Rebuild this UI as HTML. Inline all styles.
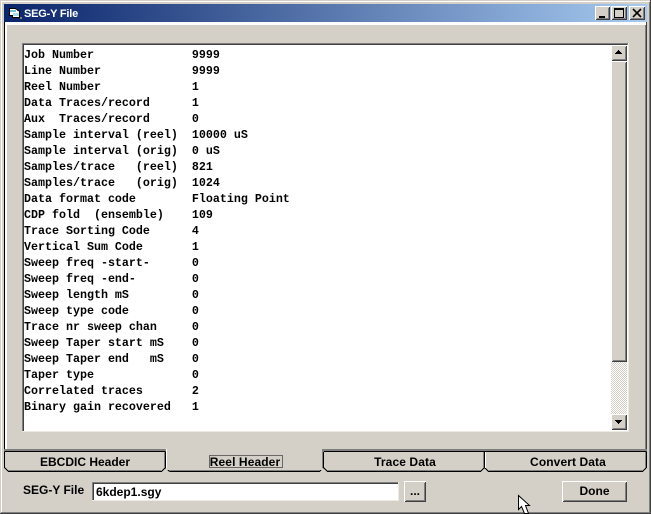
<!DOCTYPE html>
<html>
<head>
<meta charset="utf-8">
<style>
html,body{margin:0;padding:0;width:651px;height:514px;overflow:hidden;background:#d4d0c8}
.a{position:absolute}
#title{left:4px;top:4px;width:643px;height:18px;background:linear-gradient(90deg,#0a246a,#a6caf0)}
#ttext{left:24px;top:7px;font:bold 11px/14px "Liberation Sans",sans-serif;color:#fff;white-space:pre;letter-spacing:-.2px}
pre{margin:0;position:absolute;left:24px;top:47px;font:bold 11.67px/16px "Liberation Mono",monospace;color:#000}
.up{background:#d4d0c8;box-shadow:inset 1px 1px 0 #fff,inset -1px -1px 0 #404040,inset 2px 2px 0 #d4d0c8,inset -2px -2px 0 #808080}
.tab{font:bold 12px/14px "Liberation Sans",sans-serif;color:#000;text-align:center;white-space:pre}
</style>
</head>
<body>
<svg class="a" style="left:0;top:0" width="651" height="514" shape-rendering="crispEdges">
  <rect x="1" y="1" width="649" height="1" fill="#fff"/>
  <rect x="1" y="1" width="1" height="511" fill="#fff"/>
  <rect x="650" y="0" width="1" height="514" fill="#404040"/>
  <rect x="649" y="2" width="1" height="511" fill="#808080"/>
  <rect x="0" y="513" width="651" height="1" fill="#404040"/>
  <rect x="1" y="512" width="649" height="1" fill="#808080"/>
  <!-- panel -->
  <rect x="4" y="22" width="1" height="429" fill="#000"/>
  <rect x="5" y="22" width="641" height="3" fill="#fff"/>
  <rect x="5" y="23" width="2" height="427" fill="#fff"/>
  <rect x="646" y="22" width="1" height="429" fill="#404040"/>
  <rect x="645" y="25" width="1" height="425" fill="#808080"/>
  <rect x="4" y="449" width="643" height="2" fill="#808080"/>
  <!-- text box -->
  <rect x="22" y="43" width="606" height="389" fill="#fff"/>
  <rect x="22" y="43" width="606" height="2" fill="#808080"/>
  <rect x="22" y="43" width="2" height="389" fill="#808080"/>
  <rect x="23" y="44" width="604" height="1" fill="#404040"/>
  <rect x="23" y="44" width="1" height="387" fill="#404040"/>
  <rect x="22" y="431" width="607" height="1" fill="#eeeae2"/>
  <rect x="628" y="43" width="1" height="389" fill="#eeeae2"/>
  <!-- tabs -->
  <g fill="none" stroke="#000" stroke-width="1">
    <path d="M4.500 451.500H165.500M323.500 451.500H646.500"/>
    <path d="M4.500 451.500V467.500L8.500 471.500H161.500L165.500 467.500V451.500"/>
    <path d="M323.500 451.500V467.500L327.500 471.500H480.500L484.500 467.500V451.500"/>
    <path d="M484.500 451.500V467.500L488.500 471.500H642.500L646.500 467.500V451.500"/>
    <path d="M169.500 471.500H319.500L323.500 467.500"/>
    <path d="M165.500 467.500L169.500 471.500"/>
  </g>
  <rect x="169" y="470" width="151" height="1" fill="#808080"/>
  <rect x="8" y="470" width="153" height="1" fill="#808080"/>
  <rect x="327" y="470" width="154" height="1" fill="#808080"/>
  <rect x="489" y="470" width="154" height="1" fill="#808080"/>
  <rect x="164" y="452" width="1" height="16" fill="#808080"/>
  <rect x="483" y="452" width="1" height="16" fill="#808080"/>
  <rect x="645" y="452" width="1" height="16" fill="#808080"/>
  <rect x="485" y="452" width="1" height="16" fill="#fff"/>
  <!-- selected tab: covers the lower panel edge -->
  <rect x="166" y="449" width="157" height="21" fill="#d4d0c8"/>
  <rect x="169" y="470" width="151" height="1" fill="#808080"/>
  <rect x="166" y="449" width="1" height="19" fill="#fff"/>
  <rect x="322" y="449" width="2" height="3" fill="#808080"/>
  <rect x="322" y="452" width="1" height="16" fill="#808080"/>
  <!-- focus rectangle -->
  <rect x="209.500" y="455.500" width="73" height="12" fill="none" stroke="#000" stroke-dasharray="1 1"/>
  <!-- file edit -->
  <rect x="92" y="482" width="307" height="19" fill="#fff"/>
  <rect x="92" y="482" width="307" height="1" fill="#808080"/>
  <rect x="92" y="482" width="1" height="19" fill="#808080"/>
  <rect x="93" y="483" width="305" height="1" fill="#404040"/>
  <rect x="93" y="483" width="1" height="17" fill="#404040"/>
  <rect x="398" y="482" width="1" height="19" fill="#eeeae2"/>
  <rect x="92" y="500" width="307" height="1" fill="#eeeae2"/>
  <!-- cursor -->
  <path d="M518.500 495.500V509.500L521.500 506.500L524.500 513.500H528.500L525.500 505.500H529.500Z" fill="#fff" stroke="#000" stroke-width="1" shape-rendering="auto"/>
</svg>

<div id="title" class="a"></div>
<svg class="a" style="left:8px;top:7px" width="15" height="14" shape-rendering="crispEdges">
  <path d="M1.500 1.500H7.500L11.500 4.500V10.500H4.500V8.500H1.500Z" fill="#fff" stroke="#000"/>
  <rect x="2" y="3" width="6" height="2" fill="#6fc0d8"/>
  <rect x="5" y="6" width="6" height="3" fill="#a6e0f0"/>
  <rect x="12" y="10" width="2" height="2" fill="#808080"/>
</svg>
<div id="ttext" class="a">SEG-Y File</div>

<div class="a up" style="left:595px;top:6px;width:15px;height:14px"><div class="a" style="left:4px;top:10px;width:6px;height:2px;background:#000"></div></div>
<div class="a up" style="left:611px;top:6px;width:16px;height:14px"><div class="a" style="left:3px;top:2px;width:8px;height:7px;border:1px solid #000;border-top-width:2px"></div></div>
<div class="a up" style="left:629px;top:6px;width:16px;height:14px">
  <svg class="a" style="left:3px;top:2px" width="10" height="10"><path d="M1 1L9 9M9 1L1 9" stroke="#000" stroke-width="1.600"/></svg>
</div>

<pre>Job Number              9999
Line Number             9999
Reel Number             1
Data Traces/record      1
Aux  Traces/record      0
Sample interval (reel)  10000 uS
Sample interval (orig)  0 uS
Samples/trace   (reel)  821
Samples/trace   (orig)  1024
Data format code        Floating Point
CDP fold  (ensemble)    109
Trace Sorting Code      4
Vertical Sum Code       1
Sweep freq -start-      0
Sweep freq -end-        0
Sweep length mS         0
Sweep type code         0
Trace nr sweep chan     0
Sweep Taper start mS    0
Sweep Taper end   mS    0
Taper type              0
Correlated traces       2
Binary gain recovered   1</pre>

<!-- scrollbar -->
<div class="a" style="left:611px;top:362px;width:16px;height:53px;background:repeating-conic-gradient(#d4d0c8 0 25%,#fff 0 50%) 0 0/2px 2px"></div>
<div class="a up" style="left:611px;top:45px;width:16px;height:16px">
  <svg class="a" style="left:4px;top:5px" width="8" height="5" shape-rendering="crispEdges"><path d="M0 4H7V3H6V2H5V1H4V0H3V1H2V2H1V3H0Z" fill="#000"/></svg>
</div>
<div class="a up" style="left:611px;top:61px;width:16px;height:301px"></div>
<div class="a up" style="left:611px;top:414px;width:16px;height:16px">
  <svg class="a" style="left:4px;top:6px" width="8" height="5" shape-rendering="crispEdges"><path d="M0 0H7V1H6V2H5V3H4V4H3V3H2V2H1V1H0Z" fill="#000"/></svg>
</div>

<div class="a tab" style="left:5px;top:455px;width:160px">EBCDIC Header</div>
<div class="a tab" style="left:166px;top:455px;width:158px;letter-spacing:.1px">Reel Header</div>
<div class="a tab" style="left:325px;top:455px;width:160px;letter-spacing:.1px">Trace Data</div>
<div class="a tab" style="left:488px;top:455px;width:160px;letter-spacing:.1px">Convert Data</div>

<div class="a tab" style="left:23px;top:483px;text-align:left">SEG-Y File</div>
<div class="a" style="left:96px;top:485px;font:bold 12px/14px &quot;Liberation Sans&quot;,sans-serif;color:#000">6kdep1.sgy</div>

<div class="a up" style="left:404px;top:481px;width:22px;height:21px;font:bold 12px/20px &quot;Liberation Sans&quot;,sans-serif;text-align:center">...</div>
<div class="a up tab" style="left:562px;top:481px;width:65px;height:21px;line-height:20px">Done</div>
</body>
</html>
